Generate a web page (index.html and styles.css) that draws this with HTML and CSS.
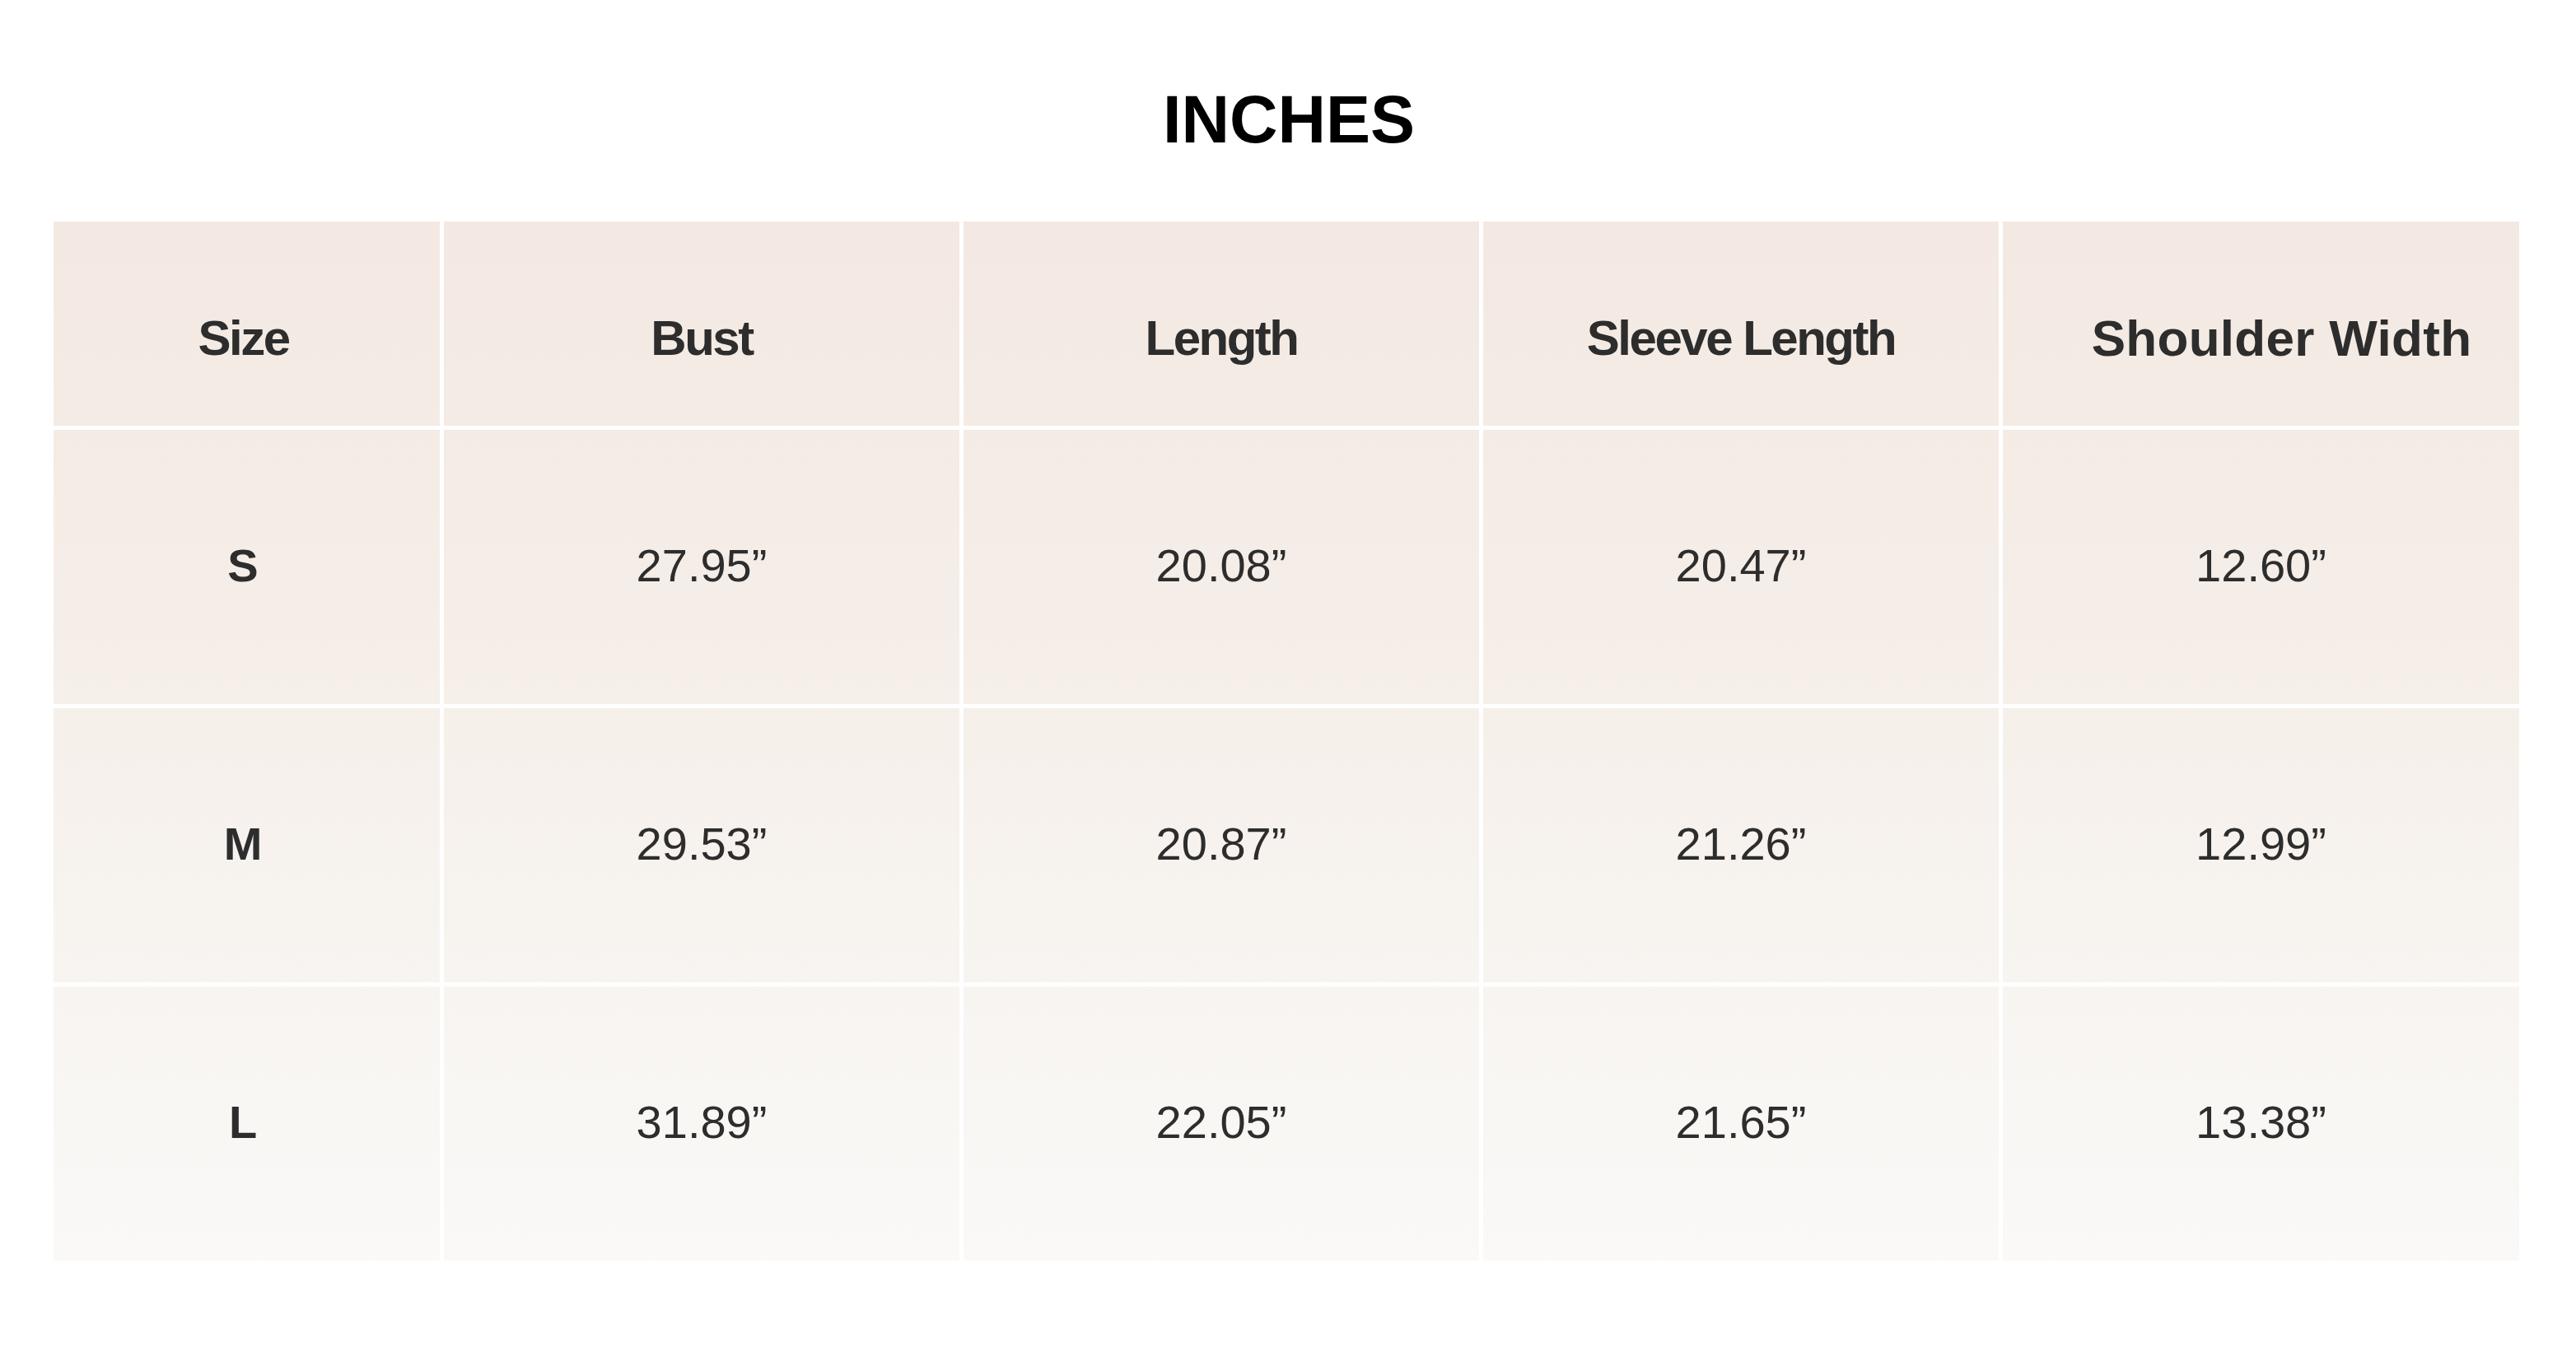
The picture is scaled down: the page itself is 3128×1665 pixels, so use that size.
FILE: index.html
```html
<!DOCTYPE html>
<html lang="en">
<head>
<meta charset="utf-8">
<title>Size chart - Inches</title>
<link rel="stylesheet" href="styles.css">
</head>
<body>
<main class="page">
  <h1 class="title">INCHES</h1>
  <div class="chart">
    <div class="row row-head">
      <div class="cell cell-first">Size</div>
      <div class="cell">Bust</div>
      <div class="cell">Length</div>
      <div class="cell">Sleeve Length</div>
      <div class="cell cell-wide">Shoulder Width</div>
    </div>
    <div class="row row-body">
      <div class="cell cell-size">S</div>
      <div class="cell">27.95”</div>
      <div class="cell">20.08”</div>
      <div class="cell">20.47”</div>
      <div class="cell">12.60”</div>
    </div>
    <div class="row row-body">
      <div class="cell cell-size">M</div>
      <div class="cell">29.53”</div>
      <div class="cell">20.87”</div>
      <div class="cell">21.26”</div>
      <div class="cell">12.99”</div>
    </div>
    <div class="row row-body row-last">
      <div class="cell cell-size">L</div>
      <div class="cell">31.89”</div>
      <div class="cell">22.05”</div>
      <div class="cell">21.65”</div>
      <div class="cell">13.38”</div>
    </div>
  </div>
</main>
</body>
</html>
```

FILE: styles.css
```css
* {
  box-sizing: border-box;
}

html, body {
  margin: 0;
  padding: 0;
  background: #ffffff;
}

body {
  font-family: "Liberation Sans", Arial, sans-serif;
  color: #2d2d2d;
}

.page {
  width: 3128px;
  height: 1665px;
  padding: 105px 69px 0 65px;
}

.title {
  margin: 0;
  font-size: 81px;
  line-height: 80px;
  font-weight: 700;
  color: #000000;
  text-align: center;
  letter-spacing: 0;
  padding-left: 6px;
}

.chart {
  margin-top: 84px;
  width: 2994px;
  background: linear-gradient(to bottom, #f3e9e2 0%, #f5ede7 35%, #f7f3ef 65%, #faf9f7 100%);
}

.row {
  display: grid;
  grid-template-columns: 474px 631px 631px 631px 1fr;
  border-bottom: 5px solid #ffffff;
}

.row-head {
  height: 253px;
}

.row-body {
  height: 338px;
}

.row-last {
  height: 333px;
  border-bottom: 0;
}

.cell {
  display: flex;
  align-items: center;
  justify-content: center;
  border-right: 5px solid #ffffff;
  font-size: 56px;
  line-height: 56px;
  font-weight: 400;
  padding-bottom: 4px;
}

.cell:last-child {
  border-right: 0;
}

.row-head .cell {
  font-size: 60px;
  line-height: 60px;
  font-weight: 700;
  letter-spacing: -2.5px;
  padding-top: 36px;
  padding-bottom: 0;
}

.row-head .cell-first {
  padding-right: 8px;
}

.row-head .cell-wide {
  font-size: 62px;
  line-height: 60px;
  letter-spacing: 0.3px;
  padding-left: 50px;
}

.cell-size {
  font-size: 56px;
  line-height: 56px;
  font-weight: 700;
  padding-right: 9px;
}
```
